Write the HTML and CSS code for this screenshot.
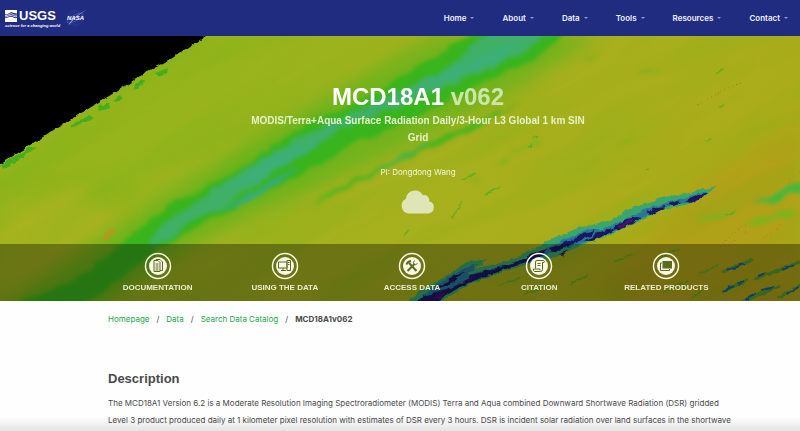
FILE: index.html
```html
<!DOCTYPE html>
<html lang="en">
<head>
<meta charset="utf-8">
<title>MCD18A1 v062</title>
<meta name="viewport" content="width=device-width, initial-scale=1">
<link rel="stylesheet" href="styles.css">
</head>
<body>
<header class="topbar">
  <div class="logos">
    <a class="usgs" href="#">
      <span class="usgs-row">
        <svg class="usgs-mark" viewBox="0 0 12 12" aria-hidden="true">
          <path fill="#fff" d="M0 0H12V3.500C9 3.500 8 2 6 2.200S3 5 0 4.300Z"/>
          <path fill="none" stroke="#fff" stroke-width=".8" d="M0 5.600C3 5.800 4.500 3.500 6.500 3.800S9 6 12 5M0 7C3 7 4.500 5 6.500 5.400S9 7.500 12 6.500"/>
          <path fill="#fff" d="M0 8.200C3 8.200 3.500 6.400 6 6.800S9 8.600 12 8V12H0Z"/>
        </svg>
        <span class="usgs-name">USGS</span>
      </span>
      <span class="usgs-tag">science for a changing world</span>
    </a>
    <a class="nasa" href="#" aria-label="NASA">
      <svg viewBox="0 0 22 18">
        <circle cx="10" cy="9" r="7.500" fill="#22308a" stroke="#33429a" stroke-width=".5"/>
        <ellipse cx="10" cy="9" rx="9" ry="3" fill="none" stroke="#5c6bb2" stroke-width=".5" transform="rotate(-28 10 9)"/>
        <path d="M21 1C14 5 6 10 3.500 16.500C7 11 13 6 21 1Z" fill="#dfe3f5"/>
        <text x="2" y="11" class="nasa-text">NASA</text>
      </svg>
    </a>
  </div>
  <nav class="menu" aria-label="Main">
    <a href="#">Home<i class="caret"></i></a>
    <a href="#">About<i class="caret"></i></a>
    <a href="#">Data<i class="caret"></i></a>
    <a href="#">Tools<i class="caret"></i></a>
    <a href="#">Resources<i class="caret"></i></a>
    <a href="#">Contact<i class="caret"></i></a>
  </nav>
</header>

<section class="hero">
  <svg class="hero-map" viewBox="0 36 800 265" preserveAspectRatio="xMidYMid slice" aria-hidden="true">
    <defs>
      <linearGradient id="land" x1="0" y1="0" x2="1" y2=".35">
        <stop offset="0" stop-color="#8eb41a"/>
        <stop offset=".3" stop-color="#98b41c"/>
        <stop offset=".6" stop-color="#a5b11e"/>
        <stop offset="1" stop-color="#adab1a"/>
      </linearGradient>
      <filter id="soft" x="-20%" y="-20%" width="140%" height="140%" color-interpolation-filters="sRGB">
        <feGaussianBlur stdDeviation="9"/>
      </filter>
      <filter id="rag" x="-10%" y="-10%" width="120%" height="120%" color-interpolation-filters="sRGB">
        <feTurbulence type="fractalNoise" baseFrequency=".06" numOctaves="3" seed="4" result="n"/>
        <feDisplacementMap in="SourceGraphic" in2="n" scale="10" xChannelSelector="R" yChannelSelector="G"/>
        <feGaussianBlur stdDeviation="2"/>
      </filter>
      <filter id="edge" x="-10%" y="-10%" width="120%" height="120%" color-interpolation-filters="sRGB">
        <feTurbulence type="fractalNoise" baseFrequency=".16" numOctaves="2" seed="8" result="n"/>
        <feDisplacementMap in="SourceGraphic" in2="n" scale="5" xChannelSelector="R" yChannelSelector="G"/>
        <feGaussianBlur stdDeviation=".6"/>
      </filter>
      <filter id="streaks" x="0" y="0" width="100%" height="100%" color-interpolation-filters="sRGB">
        <feTurbulence type="fractalNoise" baseFrequency=".006 .03" numOctaves="4" seed="11"/>
        <feColorMatrix values="0 0 0 0 .3  0 0 0 0 .72  0 0 0 0 .08  2 0 0 0 -.9"/>
      </filter>
    </defs>
    <rect y="36" width="800" height="265" fill="url(#land)"/>
    <g filter="url(#soft)">
      <path fill="#b49b18" opacity=".6" d="M700 180L800 125V310H640L600 290Z"/>
      <path fill="#a8b320" d="M0 200L80 190 120 220 0 290Z"/>
    </g>
    <g transform="rotate(-28 400 168)">
      <rect x="-60" y="-180" width="920" height="700" filter="url(#streaks)" opacity=".2"/>
    </g>
    <g filter="url(#soft)">
      <path fill="#38b51c" opacity=".45" d="M-20 320L60 270 150 205 300 110 440 36H600L500 100 400 150 300 195 180 250 80 320Z"/>
    </g>
    <g filter="url(#rag)">
      <path fill="#39b41c" d="M0 312L80 278 135 232 168 206 200 190 245 165 310 122 372 95 420 64 480 30H570L530 62 470 88 415 118 345 148 300 175 225 212 172 240 125 275 70 312Z"/>
      <path fill="#3fb065" d="M146 246L165 224 215 188 260 160 310 132 380 100 440 73 495 28H558L520 55 450 86 400 105 340 130 300 156 270 174 225 206 190 222 158 246Z"/>
      <path fill="#3caf84" opacity=".6" d="M215 195L270 160 330 134 300 158 258 180ZM400 94L470 60 530 34 500 62 440 82Z"/>
      <path fill="#32ab8c" d="M225 208L260 188 298 166 285 178 252 200Z"/>
      <path fill="#3db51c" opacity=".85" d="M308 208L345 184 395 160 450 132 520 102 462 136 402 160 350 187Z"/>
      <path fill="#45b348" opacity=".8" d="M365 176L404 154 435 140 410 158Z"/>
      <path fill="#5cb41e" opacity=".6" d="M640 75L662 66 660 71 641 77ZM585 59L600 52 590 60Z"/>
      <path fill="#43b83c" d="M750 204L775 194 802 182V192L770 202Z"/>
      <path fill="#78b51e" opacity=".8" d="M695 220L720 213 735 214 700 223ZM740 226L790 208 800 212 760 226Z"/>
      <path fill="#77b51e" opacity=".7" d="M510 151L540 140 545 142 515 152ZM495 165L510 155 507 165ZM468 180L480 175 476 182ZM618 143L634 134 630 142Z"/>
    </g>
    <g filter="url(#edge)">
      <path fill="#000" d="M-10 26H222L206 36 185 50 166 62 143 74 122 88 88 109 58 127 28 147 -10 170Z"/>
      <path fill="#37ac20" opacity=".85" d="M156 73L168 68 167 73 158 77ZM135 84L145 79 144 84 134 90ZM113 100L121 95 124 98 116 102ZM98 106L110 103 108 109 99 111ZM72 124L90 115 94 118 70 128ZM0 165L30 148 36 147 24 156 2 170Z"/>
      <g fill="none" stroke="#4fae24" stroke-width="1.500" opacity=".8">
        <path d="M716 73L724 69M719 108L724 106M706 141L712 139M532 140L538 136M528 147L532 145M646 171L650 170M726 215L735 212M453 218L461 201M485 195L500 187M462 179L476 173M403 236L410 231M500 286L520 278M525 294L545 286M570 284L588 275M615 262L632 254M660 258L680 248M664 292L688 281M700 274L718 265M690 298L704 290"/>
      </g>
      <path fill="#3aa56c" d="M402 308L422 289 446 277 466 262 488 259 476 268 508 261 535 249 550 239 566 233 578 228 592 225 612 220 628 209 645 203 664 197 690 193 716 186 706 196 685 205 664 209 640 221 612 234 582 245 560 256 530 263 500 273 470 284 450 296 430 310Z"/>
      <path fill="#2b779a" d="M410 306L432 288 464 268 478 264 468 275 506 265 536 253 564 240 588 229 602 229 626 219 646 209 680 199 708 191 700 198 664 207 640 219 612 232 582 243 560 250 530 261 500 270 460 284 434 302Z"/>
      <path fill="#1b1764" d="M410 306L424 296 446 290 464 282 470 275 484 272 504 266 520 260 540 251 548 249 540 257 520 264 500 271 476 280 460 287 442 298 430 306ZM436 289L450 279 464 271 456 280 446 286ZM550 248L572 240 582 233 596 230 590 236 578 241 566 247 552 252ZM584 241L602 231 618 228 606 235 592 241ZM613 228L624 220 636 217 641 218 632 224 618 230ZM646 213L658 207 666 206 662 210 650 215ZM668 205L676 201 681 202 674 206ZM685 202L695 196 709 192 703 197 690 203ZM558 255L568 250 562 256Z"/>
      <path fill="#4f126c" d="M618 226L634 219 631 223 620 228ZM460 283L475 275 472 279ZM505 268L525 261 515 266ZM430 299L446 292 440 298Z"/>
      <g fill="none" stroke="#3a9a3c" stroke-width="3" opacity=".75">
        <path d="M722 272L754 259M722 292L748 280M754 279L800 262M742 302L780 286M778 298L802 284"/>
      </g>
      <g fill="none" stroke="#1c5f93" stroke-width="2">
        <path d="M727 271L744 264M723 291L734 286M738 284L744 281M758 276L766 273M782 270L794 265M745 299L756 293M762 290L774 287M786 294L798 287"/>
      </g>
      <path fill="none" stroke="#b5761e" stroke-width="1" stroke-dasharray="1 3" d="M697 105L722 91 742 82M720 246L745 224M722 250L748 230M764 238L784 222M790 180L800 172"/>
      <path fill="#c38e21" opacity=".6" d="M101 238L112 229 118 226 112 236 104 241Z"/>
    </g>
  </svg>
  <div class="hero-text">
    <h1>MCD18A1 <span>v062</span></h1>
    <p class="subtitle">MODIS/Terra+Aqua Surface Radiation Daily/3-Hour L3 Global 1 km SIN Grid</p>
    <p class="pi">PI: Dongdong Wang</p>
    <svg class="cloud" viewBox="0 0 34 24" aria-hidden="true">
      <path d="M7.500 23.500A7.800 7.800 0 0 1 5 8.800A9 9 0 0 1 21.800 5.200A5 5 0 0 1 28 11.300A6.200 6.200 0 0 1 27.500 23.500Z"/>
    </svg>
  </div>
  <nav class="sections" aria-label="Sections">
    <div class="sections-inner">
      <a href="#">
        <svg viewBox="0 0 28 28" aria-hidden="true">
          <circle class="ring" cx="14" cy="14" r="12.500"/><circle class="disc" cx="14" cy="14" r="9"/>
          <path class="ink" d="M10 8.500H14L16 10.500V19.500H10ZM12 8.500V7.500H16L18.500 10V18.500H16"/>
          <path class="ink" d="M11.500 12H14.500M11.500 14H14.500M11.500 16H14.500M11.500 18H14.500"/>
        </svg>
        Documentation
      </a>
      <a href="#">
        <svg viewBox="0 0 28 28" aria-hidden="true">
          <circle class="ring" cx="14" cy="14" r="12.500"/><circle class="disc" cx="14" cy="14" r="9"/>
          <path class="ink" d="M7.500 10H16V16H7.500ZM16 8.500H19.500V18.500H16ZM10 18.500H15M12 16V18.500M17 10.500H18.500M17 12.500H18.500"/>
        </svg>
        Using the Data
      </a>
      <a href="#">
        <svg viewBox="0 0 28 28" aria-hidden="true">
          <circle class="ring" cx="14" cy="14" r="12.500"/><circle class="disc" cx="14" cy="14" r="9"/>
          <path class="ink bold" d="M11 11L18.500 19M16.500 12L9.500 19"/>
          <path class="ink bold" d="M8.500 12.500Q9.500 9.500 13 9"/>
          <path class="ink" d="M16.500 8.500Q14.500 10.500 16 12T19.500 11.500"/>
        </svg>
        Access Data
      </a>
      <a href="#">
        <svg viewBox="0 0 28 28" aria-hidden="true">
          <circle class="ring" cx="14" cy="14" r="12.500"/><circle class="disc" cx="14" cy="14" r="9"/>
          <path class="ink" d="M10.500 16.500V10Q10.500 8.500 12 8.500H18.500Q20 9 19 10.500H17.500V17.500Q17.500 19.500 15.500 19.500H9.500Q8 19 8.500 17H15V18.500M12.500 11.500H15.500M12.500 13.500H15.500"/>
        </svg>
        Citation
      </a>
      <a href="#">
        <svg viewBox="0 0 28 28" aria-hidden="true">
          <circle class="ring" cx="14" cy="14" r="12.500"/><circle class="disc" cx="14" cy="14" r="9"/>
          <path class="solid" d="M10.500 9H20V16.500H10.500Z"/>
          <path class="ink" d="M10 11H8.500V18.500H17.500V17"/>
        </svg>
        Related Products
      </a>
    </div>
  </nav>
</section>

<main class="page">
  <nav class="crumbs" aria-label="Breadcrumb">
    <a href="#">Homepage</a><span>/</span><a href="#">Data</a><span>/</span><a href="#">Search Data Catalog</a><span>/</span><strong>MCD18A1v062</strong>
  </nav>
  <h2>Description</h2>
  <p class="body">The MCD18A1 Version 6.2 is a Moderate Resolution Imaging Spectroradiometer (MODIS) Terra and Aqua combined Downward Shortwave Radiation (DSR) gridded Level 3 product produced daily at 1 kilometer pixel resolution with estimates of DSR every 3 hours. DSR is incident solar radiation over land surfaces in the shortwave</p>
</main>
<div class="bottom-shade" aria-hidden="true"></div>
</body>
</html>
```
FILE: styles.css
```css
* {
  box-sizing: border-box;
}

body {
  margin: 0;
  font-family: Inter, "Liberation Sans", Arial, sans-serif;
  font-size: 8px;
  color: #4a4a4c;
  background: #fefefe;
}

a {
  text-decoration: none;
}

.topbar {
  display: flex;
  justify-content: space-between;
  align-items: center;
  height: 36px;
  padding: 0 12px 0 5px;
  background: #202c80;
}

.logos {
  display: flex;
  align-items: center;
  gap: 5px;
}

.usgs {
  display: flex;
  flex-direction: column;
  color: #fff;
  font-family: "Liberation Sans", sans-serif;
  font-weight: 700;
}

.usgs-row {
  display: flex;
  align-items: center;
  gap: 2px;
}

.usgs-mark {
  width: 12px;
  height: 12px;
}

.usgs-name {
  font-size: 13px;
  line-height: 14px;
}

.usgs-tag {
  font-size: 4px;
  font-style: italic;
  line-height: 5px;
}

.nasa svg {
  display: block;
  width: 22px;
  height: 18px;
}

.nasa-text {
  font: italic 700 6px "Liberation Sans", sans-serif;
  fill: #fff;
}

.menu {
  display: flex;
  gap: 28px;
}

.menu a {
  display: flex;
  align-items: center;
  gap: 4px;
  color: #eef0fb;
  font-weight: 600;
}

.caret {
  border: 2px solid transparent;
  border-top-color: #8f98cc;
  border-bottom: 0;
}

.hero {
  position: relative;
  overflow: hidden;
  background: #a0b31d;
}

.hero-map {
  position: absolute;
  inset: 0;
  width: 100%;
  height: 100%;
}

.hero-text {
  position: relative;
  display: flex;
  flex-direction: column;
  align-items: center;
  width: 350px;
  max-width: 100%;
  margin: 0 auto;
  padding: 46px 0 30px;
  left: 18px;
  text-align: center;
  color: #f4f7e0;
}

.hero-text h1 {
  margin: 0;
  font-family: "Liberation Sans", Arial, sans-serif;
  font-size: 24px;
  line-height: 30px;
  color: #fff;
}

.hero-text h1 span {
  color: #cbe7a8;
}

.subtitle {
  margin: 0;
  font-family: "Liberation Sans", Arial, sans-serif;
  font-size: 10px;
  font-weight: 700;
  line-height: 17px;
  color: #e6f2c8;
}

.pi {
  margin: 20px 0 12px;
  line-height: 12px;
}

.cloud {
  width: 34px;
  height: 24px;
  fill: #dfe6b6;
}

.sections {
  position: relative;
  padding: 8px 0;
  background: rgba(0, 0, 0, 0.34);
}

.sections-inner,
.page {
  max-width: 636px;
  margin: 0 auto;
  position: relative;
  left: 12px;
}

.sections-inner {
  display: grid;
  grid-template-columns: repeat(5, 1fr);
}

.sections a {
  display: flex;
  flex-direction: column;
  align-items: center;
  gap: 3px;
  color: #e9ecd0;
  font-family: "Liberation Sans", Arial, sans-serif;
  font-weight: 700;
  line-height: 10px;
  text-transform: uppercase;
}

.sections svg {
  width: 28px;
  height: 28px;
}

.ring {
  fill: none;
  stroke: #f6f7e4;
  stroke-width: 1.5;
}

.disc {
  fill: #f6f7e4;
}

.ink {
  fill: none;
  stroke: #5c6b20;
  stroke-width: 1;
}

.ink.bold {
  stroke-width: 2;
}

.solid {
  fill: #5c6b20;
}

.page {
  max-width: 644px;
  left: 16px;
  padding: 12px 0 0 14px;
}

.crumbs {
  display: flex;
  gap: 7px;
  line-height: 12px;
}

.crumbs a {
  color: #1fa84c;
}

.page h2 {
  margin: 46px 0 8px;
  font-family: "Liberation Sans", Arial, sans-serif;
  font-size: 13px;
  line-height: 16px;
}

.body {
  margin: 0;
  line-height: 17px;
}

.bottom-shade {
  position: fixed;
  right: 0;
  bottom: 0;
  left: 0;
  height: 14px;
  background: linear-gradient(rgba(0, 0, 0, 0), rgba(0, 0, 0, 0.1));
  pointer-events: none;
}
```
